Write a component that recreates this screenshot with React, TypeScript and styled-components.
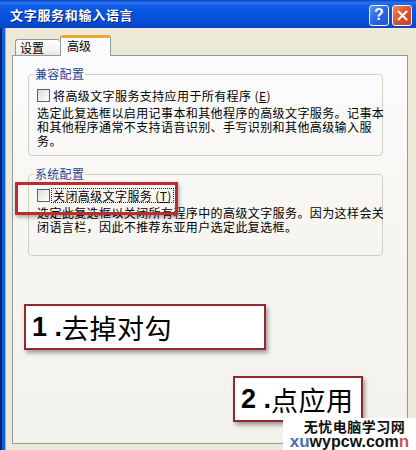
import React from "react";
import styled, { createGlobalStyle } from "styled-components";

const GlobalStyle = createGlobalStyle`
  html, body { margin: 0; padding: 0; background: #ECE9D8; }
  body { font-family: "Noto Sans CJK SC", "Liberation Sans", sans-serif; }
`;

const CJK = `"Noto Sans CJK SC", "Liberation Sans", sans-serif`;

const Window = styled.div`
  position: relative;
  width: 416px;
  height: 450px;
  overflow: hidden;
  display: flex;
  flex-direction: column;
  background: #ECE9D8;
`;

const TitleBar = styled.div`
  height: 28px;
  flex: none;
  display: flex;
  align-items: center;
  padding: 2px 4px 0 10px;
  box-sizing: border-box;
  background: linear-gradient(
    #0844c8 0%,
    #2a74ec 10%,
    #0d5ae6 22%,
    #0652e0 55%,
    #064cd4 85%,
    #0a44c0 100%
  );
`;

const Title = styled.div`
  flex: 1;
  color: #fff;
  font-family: ${CJK};
  font-weight: 700;
  font-size: 13px;
  letter-spacing: 0.7px;
  line-height: 16px;
  text-shadow: 1px 1px 0 #0a1e78;
`;

const CapButton = styled.div<{ $kind: "help" | "close" }>`
  width: 20px;
  height: 21px;
  box-sizing: border-box;
  margin-left: 3px;
  border: 1px solid #f4f6ff;
  border-radius: 3px;
  display: flex;
  align-items: center;
  justify-content: center;
  color: #fff;
  font-family: "Liberation Sans", sans-serif;
  font-weight: 700;
  font-size: 16px;
  background: ${(p) =>
    p.$kind === "help"
      ? "linear-gradient(135deg, #5b93f8 0%, #2a66e8 50%, #1d50d0 100%)"
      : "linear-gradient(135deg, #ee8a66 0%, #db5330 50%, #c5401c 100%)"};
`;

const Body = styled.div`
  flex: 1;
  display: flex;
  min-height: 0;
`;

const SideBorder = styled.div`
  width: 6px;
  flex: none;
  background: linear-gradient(90deg, #08246e 0px, #08246e 2px, #0c58d8 2px, #1a66e4 5px, #8fb0e8 5px, #8fb0e8 6px);
`;

const Content = styled.div`
  flex: 1;
  display: flex;
  flex-direction: column;
  padding: 7px 8px 6px 6px;
  min-width: 0;
`;

const Tabs = styled.div`
  display: flex;
  align-items: flex-end;
  padding-left: 3px;
  height: 21px;
  position: relative;
  z-index: 1;
  margin-bottom: -1px;
`;

const Tab = styled.div<{ $active?: boolean }>`
  box-sizing: border-box;
  height: ${(p) => (p.$active ? 21 : 17)}px;
  width: ${(p) => (p.$active ? 51 : 45)}px;
  border: 1px solid #919b9c;
  border-bottom: ${(p) => (p.$active ? "none" : "1px solid #919b9c")};
  border-top: ${(p) => (p.$active ? "3px solid #f0a830" : "1px solid #919b9c")};
  border-right: ${(p) => (p.$active ? "1px solid #919b9c" : "none")};
  border-radius: 3px 3px 0 0;
  background: ${(p) =>
    p.$active ? "#fcfcfe" : "linear-gradient(#ffffff, #f1f0ea 80%, #e6e4dc)"};
  font-family: ${CJK};
  font-size: 12px;
  line-height: 14px;
  color: #000;
  padding: ${(p) => (p.$active ? "1px 0 0 6px" : "1px 0 0 4px")};
`;

const Panel = styled.div`
  position: relative;
  flex: 1;
  border: 1px solid #919b9c;
  background: linear-gradient(#fcfcfe 0%, #f7f6f2 40%, #f2f1eb 100%);
  padding-top: 11px;
  display: flex;
  flex-direction: column;
`;

const Group = styled.fieldset<{ $pb: number; $mt?: number }>`
  margin: ${(p) => p.$mt ?? 0}px 24px 0 15px;
  padding: 7px 8px ${(p) => p.$pb}px 8px;
  border: 1px solid #d0d0bf;
  border-radius: 4px;
  min-width: 0;
`;

const Legend = styled.legend`
  padding: 0 1px;
  margin-left: -3px;
  font-family: ${CJK};
  font-size: 12px;
  line-height: 14px;
  color: #2a4591;
  letter-spacing: 0.3px;
`;

const CheckRow = styled.div`
  display: flex;
  align-items: center;
  height: 14px;
  font-family: ${CJK};
  font-size: 12px;
  letter-spacing: 0.4px;
  color: #000;
`;

const Box = styled.span`
  width: 13px;
  height: 13px;
  box-sizing: border-box;
  flex: none;
  border: 1px solid #4f6582;
  background: linear-gradient(135deg, #dcdcd5 0%, #f2f2ee 60%, #ffffff 100%);
  margin-right: 2px;
`;

const CheckLabel = styled.span<{ $focus?: boolean }>`
  line-height: 13px;
  padding: 0 1px;
  outline: ${(p) => (p.$focus ? "1px dotted #222" : "none")};
  white-space: nowrap;
`;

const Key = styled.span`
  text-decoration: underline;
`;

const Desc = styled.div`
  margin-top: 4px;
  font-family: ${CJK};
  font-size: 12px;
  letter-spacing: 0.4px;
  line-height: 14px;
  color: #000;
  white-space: nowrap;
`;

const Highlight = styled.div`
  position: absolute;
  left: 2px;
  top: 126px;
  width: 163px;
  height: 33px;
  box-sizing: border-box;
  border: 3px solid #bd2a30;
  box-shadow: 1px 2px 4px rgba(0, 0, 0, 0.35);
  pointer-events: none;
`;

const Callouts = styled.div`
  display: flex;
  flex-direction: column;
  align-items: flex-start;
`;

const Callout = styled.div<{ $ml: number; $mt: number; $w: number }>`
  margin-left: ${(p) => p.$ml}px;
  margin-top: ${(p) => p.$mt}px;
  width: ${(p) => p.$w}px;
  height: 46px;
  box-sizing: border-box;
  background: #fff;
  border: 2px solid #93292e;
  box-shadow: 2px 3px 4px rgba(0, 0, 0, 0.35);
  display: flex;
  align-items: center;
  padding-left: 6px;
  color: #000;
  white-space: nowrap;
`;

const Num = styled.span`
  font-family: "Liberation Sans", sans-serif;
  font-weight: 700;
  font-size: 27px;
  white-space: pre;
`;

const CalloutText = styled.span`
  font-family: ${CJK};
  font-weight: 400;
  font-size: 27px;
  letter-spacing: 0.5px;
`;

const Watermark = styled.div`
  position: absolute;
  right: 0;
  bottom: 0;
  width: 133px;
  height: 32px;
  background: #fff;
  display: flex;
  flex-direction: column;
  align-items: center;
`;

const WmTitle = styled.div`
  font-family: ${CJK};
  font-weight: 700;
  font-size: 14px;
  line-height: 15px;
  letter-spacing: 0.5px;
  color: #111;
  margin-top: 1px;
  padding-left: 10px;
`;

const WmUrl = styled.div`
  display: flex;
  align-items: baseline;
  font-family: "Liberation Sans", sans-serif;
  font-weight: 700;
  font-size: 16px;
  line-height: 15px;
  color: #111;
`;

const WmColor = styled.span<{ $c: string }>`
  color: ${(p) => p.$c};
  font-size: 17px;
  opacity: 0.85;
`;

export default function App() {
  return (
    <>
      <GlobalStyle />
      <Window>
        <TitleBar>
          <Title>文字服务和输入语言</Title>
          <CapButton $kind="help">?</CapButton>
          <CapButton $kind="close">
            <svg width="11" height="11" viewBox="0 0 11 11">
              <path d="M1.5 1.5 L9.5 9.5 M9.5 1.5 L1.5 9.5" stroke="#fff" strokeWidth="2" strokeLinecap="round" />
            </svg>
          </CapButton>
        </TitleBar>
        <Body>
          <SideBorder />
          <Content>
            <Tabs>
              <Tab>设置</Tab>
              <Tab $active>高级</Tab>
            </Tabs>
            <Panel>
              <Group $pb={7}>
                <Legend>兼容配置</Legend>
                <CheckRow>
                  <Box />
                  <CheckLabel>
                    将高级文字服务支持应用于所有程序 (<Key>E</Key>)
                  </CheckLabel>
                </CheckRow>
                <Desc>
                  选定此复选框以启用记事本和其他程序的高级文字服务。记事本
                  <br />
                  和其他程序通常不支持语音识别、手写识别和其他高级输入服
                  <br />
                  务。
                </Desc>
              </Group>
              <Group $pb={21} $mt={11}>
                <Legend>系统配置</Legend>
                <CheckRow>
                  <Box />
                  <CheckLabel $focus>
                    关闭高级文字服务 (<Key>T</Key>)
                  </CheckLabel>
                </CheckRow>
                <Desc>
                  选定此复选框以关闭所有程序中的高级文字服务。因为这样会关
                  <br />
                  闭语言栏，因此不推荐东亚用户选定此复选框。
                </Desc>
              </Group>
              <Callouts>
                <Callout $ml={11} $mt={48} $w={242}>
                  <Num>1 .</Num>
                  <CalloutText>去掉对勾</CalloutText>
                </Callout>
                <Callout $ml={220} $mt={26} $w={130}>
                  <Num>2 .</Num>
                  <CalloutText>点应用</CalloutText>
                </Callout>
              </Callouts>
              <Highlight />
            </Panel>
          </Content>
        </Body>
        <Watermark>
          <WmTitle>无忧电脑学习网</WmTitle>
          <WmUrl>
            <WmColor $c="#2a56a8">xu</WmColor>
            wypcw.com
            <WmColor $c="#c8343c">n</WmColor>
          </WmUrl>
        </Watermark>
      </Window>
    </>
  );
}
